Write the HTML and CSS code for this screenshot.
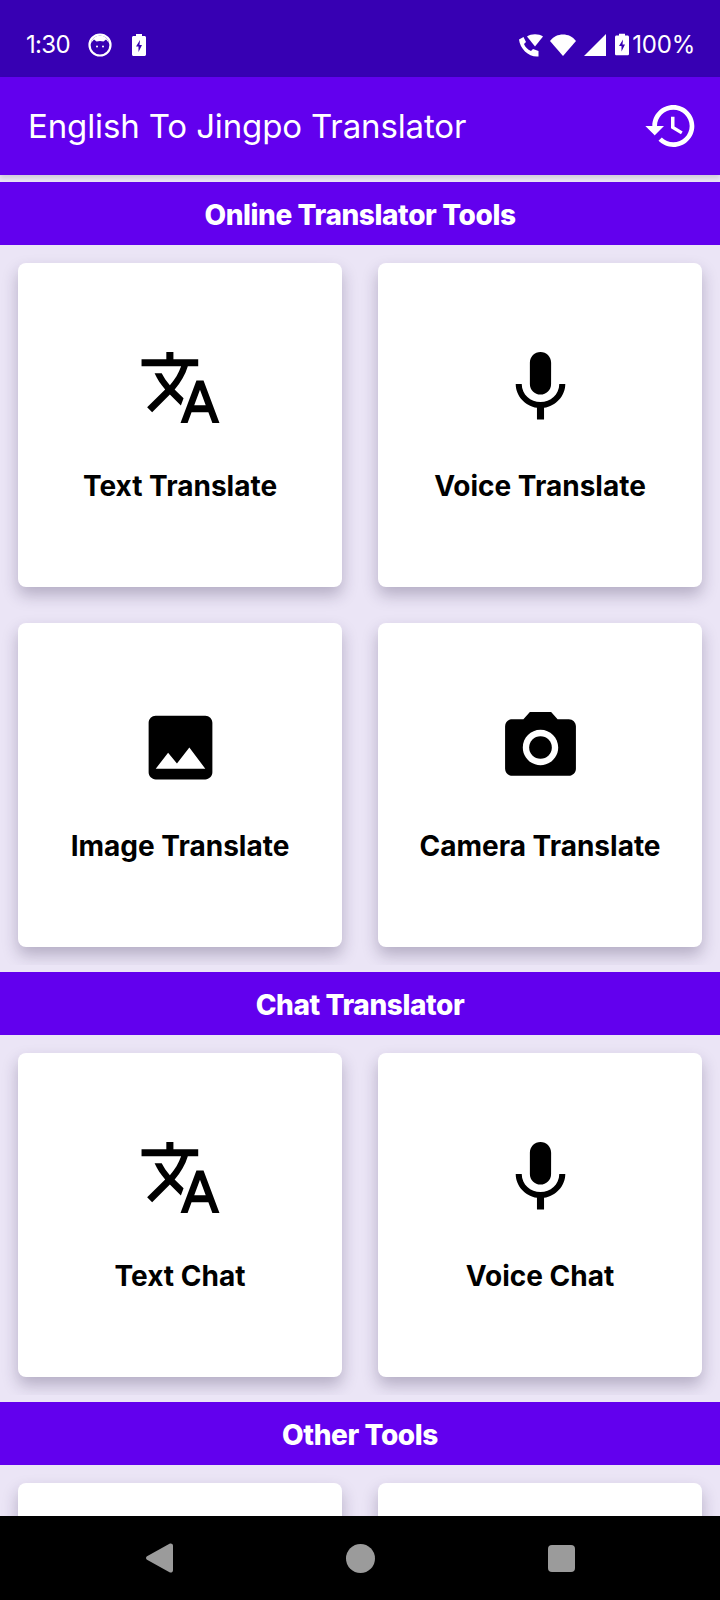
FILE: index.html
```html
<!DOCTYPE html>
<html lang="en">
<head>
  <meta charset="UTF-8">
  <meta name="viewport" content="width=device-width, initial-scale=1.0">
  <title>English To Jingpo Translator</title>
  <link rel="stylesheet" href="styles.css">
</head>
<body>
  <svg class="icon-defs" aria-hidden="true">
    <symbol id="i-translate" viewBox="0 0 24 24"><path d="M12.87 15.07l-2.54-2.51.03-.03c1.74-1.94 2.98-4.17 3.71-6.53H17V4h-7V2H8v2H1v1.99h11.17C11.5 7.92 10.44 9.75 9 11.35 8.07 10.32 7.3 9.19 6.69 8h-2c.73 1.63 1.73 3.17 2.98 4.56l-5.09 5.02L4 19l5-5 3.11 3.11.76-2.04zM18.5 10h-2L12 22h2l1.12-3h4.75L21 22h2l-4.5-12zm-2.62 7l1.62-4.33L19.12 17h-3.24z"/></symbol>
    <symbol id="i-mic" viewBox="0 0 24 24"><path d="M12 14c1.66 0 2.99-1.34 2.99-3L15 5c0-1.66-1.34-3-3-3S9 3.34 9 5v6c0 1.66 1.34 3 3 3zm5.3-3c0 3-2.54 5.1-5.3 5.1S6.7 14 6.7 11H5c0 3.41 2.72 6.23 6 6.72V21h2v-3.28c3.28-.48 6-3.3 6-6.72h-1.7z"/></symbol>
    <symbol id="i-image" viewBox="0 0 24 24"><path d="M21 19V5c0-1.1-.9-2-2-2H5c-1.1 0-2 .9-2 2v14c0 1.1.9 2 2 2h14c1.1 0 2-.9 2-2zM8.5 13.5l2.5 3.01L14.5 12l4.5 6H5l3.5-4.5z"/></symbol>
    <symbol id="i-camera" viewBox="0 0 24 24"><circle cx="12" cy="12" r="3.2"/><path d="M9 2L7.17 4H4c-1.1 0-2 .9-2 2v12c0 1.1.9 2 2 2h16c1.1 0 2-.9 2-2V6c0-1.1-.9-2-2-2h-3.17L15 2H9zm3 15c-2.76 0-5-2.24-5-5s2.24-5 5-5 5 2.24 5 5-2.24 5-5 5z"/></symbol>
    <symbol id="i-bolt-battery" viewBox="0 0 14 22"><path fill-rule="evenodd" d="M4 0h6v2h2.500c.8 0 1.500.7 1.500 1.500v17c0 .8-.7 1.500-1.500 1.500h-11C.7 22 0 21.300 0 20.500v-17C0 2.700.7 2 1.500 2H4zM8 6L4 12.500h2.500V18L10 11H7.500z"/></symbol>
  </svg>

  <div class="status-bar">
    <div class="status-left">
      <span class="status-text">1:30</span>
      <svg class="cat-icon" viewBox="0 0 24 24" fill="#fff">
        <circle cx="12" cy="12" r="10.500" fill="none" stroke="#fff" stroke-width="2.200"/>
        <path d="M3 10C4 5 8 2.500 12 2.500s8 2.500 9 7.500l-3-3.500-2.500 2c-2.300-.8-4.700-.8-7 0L6 6.500z"/>
        <circle cx="9" cy="13.500" r="1"/>
        <circle cx="15" cy="13.500" r="1"/>
      </svg>
      <svg class="battery-small" viewBox="0 0 14 22"><use href="#i-bolt-battery"/></svg>
    </div>
    <div class="status-right">
      <svg class="status-icon" viewBox="0 0 26 24" fill="#fff">
        <path d="M9 3.500C13 .5 21 .5 25 3.500L17 13.500z"/>
        <path d="M1 6.500L5.500 4l2.500 5-2 2c1.200 3 3.500 5.500 7 7l2-2 5.500 2v5.500C11 24.500 2 16 1 6.500z"/>
      </svg>
      <svg class="status-icon wifi" viewBox="0 0 26 22" fill="#fff"><path d="M0 7C3.500 2.500 8 .5 13 .5S22.500 2.500 26 7L13 22z"/></svg>
      <svg class="status-icon signal" viewBox="0 0 22 22" fill="#fff"><path d="M22 0v22H0z"/></svg>
      <svg class="battery-big" viewBox="0 0 14 22"><use href="#i-bolt-battery"/></svg>
      <span class="status-text pct">100%</span>
    </div>
  </div>

  <header class="app-bar">
    <h1>English To Jingpo Translator</h1>
    <svg class="history-icon" viewBox="0 0 24 24" fill="#fff"><path d="M13 3c-4.970 0-9 4.030-9 9H1l3.890 3.890.07.14L9 12H6c0-3.870 3.130-7 7-7s7 3.130 7 7-3.130 7-7 7c-1.930 0-3.680-.79-4.940-2.060l-1.420 1.420C8.270 19.990 10.510 21 13 21c4.970 0 9-4.030 9-9s-4.030-9-9-9zm-1 5v5l4.280 2.540.72-1.210-3.500-2.080V8H12z"/></svg>
  </header>

  <main class="content">
    <h2 class="section-title">Online Translator Tools</h2>
    <section class="tool-grid">
      <div class="tool-card"><svg class="tool-icon"><use href="#i-translate"/></svg><span class="tool-label">Text Translate</span></div>
      <div class="tool-card"><svg class="tool-icon"><use href="#i-mic"/></svg><span class="tool-label">Voice Translate</span></div>
      <div class="tool-card"><svg class="tool-icon"><use href="#i-image"/></svg><span class="tool-label">Image Translate</span></div>
      <div class="tool-card"><svg class="tool-icon"><use href="#i-camera"/></svg><span class="tool-label">Camera Translate</span></div>
    </section>

    <h2 class="section-title">Chat Translator</h2>
    <section class="tool-grid">
      <div class="tool-card"><svg class="tool-icon"><use href="#i-translate"/></svg><span class="tool-label">Text Chat</span></div>
      <div class="tool-card"><svg class="tool-icon"><use href="#i-mic"/></svg><span class="tool-label">Voice Chat</span></div>
    </section>

    <h2 class="section-title">Other Tools</h2>
    <section class="tool-grid">
      <div class="tool-card"></div>
      <div class="tool-card"></div>
    </section>
  </main>

  <nav class="nav-bar">
    <svg class="nav-back" viewBox="0 0 27 30" fill="#9b9b9b"><path d="M1 13.300L23.500.800C25 0 27 .8 27 2.800v24.400c0 2-2 2.800-3.500 2L1 16.700c-1.300-.9-1.300-2.500 0-3.400z"/></svg>
    <span class="nav-home"></span>
    <span class="nav-recent"></span>
  </nav>
</body>
</html>
```

FILE: styles.css
```css
* {
  box-sizing: border-box;
}
body {
  margin: 0;
  width: 720px;
  height: 1600px;
  overflow: hidden;
  display: flex;
  flex-direction: column;
  background-color: #ebe5f6;
  font-family: Inter, "Liberation Sans", sans-serif;
}
.icon-defs {
  display: none;
}

.status-bar {
  height: 77px;
  flex: none;
  background-color: #3700b3;
  color: white;
  display: flex;
  justify-content: space-between;
  align-items: center;
  padding: 12px 25px 0 26px;
}
.status-left,
.status-right {
  display: flex;
  align-items: center;
}
.status-text {
  font-size: 24px;
  font-weight: 400;
  letter-spacing: -0.7px;
}
.cat-icon {
  width: 24px;
  height: 24px;
  margin-left: 18px;
}
.battery-small {
  width: 14px;
  height: 22px;
  margin-left: 20px;
  fill: white;
}
.status-icon {
  width: 26px;
  height: 24px;
}
.status-icon.wifi {
  width: 26px;
  height: 22px;
  margin-left: 6px;
}
.status-icon.signal {
  width: 22px;
  height: 22px;
  margin-left: 8px;
}
.battery-big {
  width: 14px;
  height: 23px;
  margin-left: 9px;
  fill: white;
}
.pct {
  margin-left: 3px;
  letter-spacing: -0.2px;
}

.app-bar {
  height: 98px;
  flex: none;
  background-color: #6200ee;
  color: white;
  display: flex;
  justify-content: space-between;
  align-items: center;
  padding: 0 21px 0 28px;
  box-shadow: 0 3px 5px rgba(0, 0, 0, 0.12);
  position: relative;
}
.app-bar h1 {
  margin: 0;
  font-size: 33px;
  font-weight: 400;
  letter-spacing: -0.13px;
}
.history-icon {
  width: 56px;
  height: 56px;
}

.content {
  flex: 1;
  overflow: hidden;
  padding-top: 7px;
}
.section-title {
  margin: 0;
  height: 63px;
  background-color: #6200ee;
  color: white;
  font-size: 28px;
  font-weight: 800;
  line-height: 66px;
  text-align: center;
  letter-spacing: -0.4px;
}
.tool-grid {
  display: grid;
  grid-template-columns: 1fr 1fr;
  gap: 36.5px 36px;
  padding: 18px;
  margin-bottom: 7.5px;
  overflow: hidden;
}
.tool-card {
  height: 323.5px;
  background-color: white;
  border-radius: 8px;
  box-shadow: 0 8px 16px rgba(40, 30, 70, 0.28);
  display: flex;
  flex-direction: column;
  align-items: center;
  justify-content: center;
}
.tool-icon {
  width: 85px;
  height: 85px;
  margin-top: 1px;
}
.tool-label {
  margin-top: 36px;
  margin-bottom: 0;
  font-size: 28px;
  font-weight: 700;
  line-height: 40px;
  color: black;
}

.nav-bar {
  height: 84px;
  flex: none;
  background-color: black;
  position: relative;
  z-index: 1;
  display: flex;
  align-items: center;
  padding: 0 0 0 146px;
}
.nav-back {
  width: 27px;
  height: 30px;
}
.nav-home {
  width: 29px;
  height: 29px;
  margin-left: 173px;
  border-radius: 50%;
  background-color: #9b9b9b;
}
.nav-recent {
  width: 27px;
  height: 27px;
  margin-left: 173px;
  border-radius: 4px;
  background-color: #9b9b9b;
}
```
